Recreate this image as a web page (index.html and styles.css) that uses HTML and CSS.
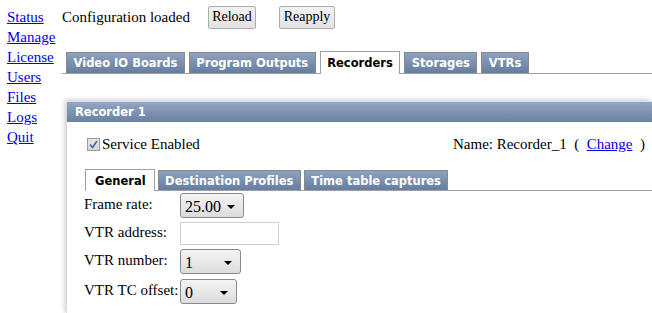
FILE: index.html
```html
<!DOCTYPE html>
<html>
<head>
<meta charset="utf-8">
<link rel="stylesheet" href="styles.css">
</head>
<body>
<div class="page">
  <nav class="nav">
    <a href="#">Status</a>
    <a href="#">Manage</a>
    <a href="#">License</a>
    <a href="#">Users</a>
    <a href="#">Files</a>
    <a href="#">Logs</a>
    <a href="#">Quit</a>
  </nav>
  <div class="main">
    <div class="topbar">
      <span class="status">Configuration loaded</span>
      <button class="btn btn-reload">Reload</button>
      <button class="btn btn-reapply">Reapply</button>
    </div>
    <div class="tabs">
      <span class="tab">Video IO Boards</span>
      <span class="tab">Program Outputs</span>
      <span class="tab active">Recorders</span>
      <span class="tab">Storages</span>
      <span class="tab">VTRs</span>
    </div>
    <div class="panel">
      <div class="panel-head">Recorder 1</div>
      <div class="panel-body">
        <div class="svc-row">
          <label class="svc"><span class="chk"><svg width="11" height="11" viewBox="0 0 11 11"><path d="M2 5.5 L4.5 8.5 L9 2" fill="none" stroke="#4a5fa8" stroke-width="1.6"/></svg></span>Service Enabled</label>
          <span class="name">Name: Recorder_1 &nbsp;(&nbsp; <a href="#">Change</a> &nbsp;)</span>
        </div>
        <div class="subtabs">
          <span class="tab active">General</span>
          <span class="tab">Destination Profiles</span>
          <span class="tab">Time table captures</span>
        </div>
        <div class="form">
          <div class="row r1"><span class="lbl">Frame rate:</span><span class="sel w64">25.00<i class="arr"></i></span></div>
          <div class="row r2"><span class="lbl">VTR address:</span><span class="inp"></span></div>
          <div class="row r3"><span class="lbl">VTR number:</span><span class="sel w61">1<i class="arr"></i></span></div>
          <div class="row r4"><span class="lbl">VTR TC offset:</span><span class="sel w57">0<i class="arr"></i></span></div>
        </div>
      </div>
    </div>
  </div>
</div>
</body>
</html>
```
FILE: styles.css
```css
html, body { margin: 0; padding: 0; background: #fff; }
body { font-family: "Liberation Serif", "Times New Roman", serif; font-size: 15px; color: #000; overflow: hidden; }
.page { display: flex; align-items: flex-start; }
.nav { display: flex; flex-direction: column; padding: 7px 0 0 7px; width: 55px; }
.nav a { color: #0000ee; line-height: 20px; text-decoration: underline; }
.main { flex: 1; padding-left: 0; }
.topbar { display: flex; align-items: center; height: 22px; margin-top: 6px; }
.status { width: 146px; }
.btn { font-family: "Liberation Serif", serif; font-size: 14px; height: 23px; padding: 0; border: 1px solid #acacac; border-radius: 2px; background: linear-gradient(#f2f2f2, #e2e2e2); color: #000; }
.btn-reload { width: 48px; margin-right: 23px; }
.btn-reapply { width: 56px; }
.tabs { display: flex; align-items: flex-end; margin-top: 22px; padding-left: 4px; border-bottom: 1px solid #a0a0a0; height: 23px; }
.tab { font-family: "DejaVu Sans", Verdana, sans-serif; font-weight: bold; font-size: 11.5px; color: #fff; height: 21px; line-height: 21px; padding: 0 6.5px; margin-right: 4px; background: linear-gradient(#8ea2bf, #667d9f); border: 1px solid #8a8a8a; border-bottom: none; box-sizing: border-box; white-space: nowrap; }
.tab.active { background: #fff; color: #000; height: 23px; line-height: 23px; margin-bottom: -1px; border-color: #a0a0a0; }
.panel { margin: 27px 0 0 5px; box-shadow: -2px -1px 5px rgba(0,0,0,0.22); }
.panel-head { height: 20px; line-height: 20px; padding-left: 8px; color: #fff; font-family: "DejaVu Sans", Verdana, sans-serif; font-weight: bold; font-size: 11.5px; background: linear-gradient(#93a6c2, #6a81a2); border-top: 1px solid #dde; }
.panel-body { padding: 0 0 10px 17px; }
.svc-row { display: flex; justify-content: space-between; height: 24px; margin-top: 10px; align-items: center; padding-right: 7px; padding-left: 3px; }
.svc { display: flex; align-items: center; }
.chk { width: 11px; height: 11px; border: 1px solid #9a9a9a; background: linear-gradient(#e6e6e6, #d6d6e0); margin-right: 2px; display: flex; }
.name a { color: #0000ee; }
.subtabs { display: flex; align-items: flex-end; margin-top: 12px; margin-left: 1px; height: 22px; border-bottom: 1px solid #a0a0a0; }
.subtabs .tab { height: 20px; line-height: 20px; margin-right: 3px; }
.subtabs .tab.active { height: 22px; line-height: 22px; padding: 0 8px 0 9px; }
.form { display: flex; flex-direction: column; }
.row { display: flex; align-items: flex-start; }
.lbl { width: 96px; line-height: 20px; white-space: nowrap; }
.r1 { margin-top: 2px; height: 28px; }
.r1 .lbl { padding-top: 1px; }
.r2 { height: 28px; }
.r2 .lbl { padding-top: 1px; }
.r3 { height: 30px; }
.r3 .lbl { padding-top: 1px; }
.r4 .lbl { padding-top: 1px; }
.sel { position: relative; box-sizing: border-box; height: 25px; line-height: 26px; padding-left: 4px; border: 1px solid #8a8a8a; border-radius: 3px; background: linear-gradient(#f4f4f4, #dcdcdc); font-size: 16px; }
.arr { position: absolute; right: 8px; top: 11px; width: 0; height: 0; border-left: 4px solid transparent; border-right: 4px solid transparent; border-top: 4px solid #000; }
.w64 { width: 64px; }
.w61 { width: 61px; }
.w57 { width: 57px; }
.inp { box-sizing: border-box; width: 99px; height: 23px; border: 1px solid #d0d0d0; margin-top: 1px; }
```
